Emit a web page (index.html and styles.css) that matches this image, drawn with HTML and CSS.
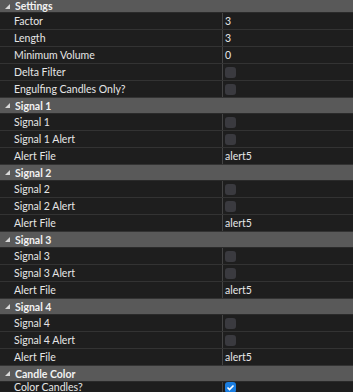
FILE: index.html
```html
<html>
	<head>
		<title>Properties</title>
		<link rel="stylesheet" href="styles.css">
	</head>
	<body>
		<div class="grid">
			<div class="cat first"><svg class="tri" width="5" height="5"><polygon points="5,0 5,5 0,5"/></svg>Settings</div>
			<div class="row"><div class="name">Factor</div><div class="val">3</div></div>
			<div class="row"><div class="name">Length</div><div class="val">3</div></div>
			<div class="row"><div class="name">Minimum Volume</div><div class="val">0</div></div>
			<div class="row"><div class="name">Delta Filter</div><div class="val"><span class="box"></span></div></div>
			<div class="row"><div class="name">Engulfing Candles Only?</div><div class="val"><span class="box"></span></div></div>

			<div class="cat"><svg class="tri" width="5" height="5"><polygon points="5,0 5,5 0,5"/></svg>Signal 1</div>
			<div class="row"><div class="name">Signal 1</div><div class="val"><span class="box"></span></div></div>
			<div class="row"><div class="name">Signal 1 Alert</div><div class="val"><span class="box"></span></div></div>
			<div class="row"><div class="name">Alert File</div><div class="val">alert5</div></div>

			<div class="cat"><svg class="tri" width="5" height="5"><polygon points="5,0 5,5 0,5"/></svg>Signal 2</div>
			<div class="row"><div class="name">Signal 2</div><div class="val"><span class="box"></span></div></div>
			<div class="row"><div class="name">Signal 2 Alert</div><div class="val"><span class="box"></span></div></div>
			<div class="row"><div class="name">Alert File</div><div class="val">alert5</div></div>

			<div class="cat"><svg class="tri" width="5" height="5"><polygon points="5,0 5,5 0,5"/></svg>Signal 3</div>
			<div class="row"><div class="name">Signal 3</div><div class="val"><span class="box"></span></div></div>
			<div class="row"><div class="name">Signal 3 Alert</div><div class="val"><span class="box"></span></div></div>
			<div class="row"><div class="name">Alert File</div><div class="val">alert5</div></div>

			<div class="cat"><svg class="tri" width="5" height="5"><polygon points="5,0 5,5 0,5"/></svg>Signal 4</div>
			<div class="row"><div class="name">Signal 4</div><div class="val"><span class="box"></span></div></div>
			<div class="row"><div class="name">Signal 4 Alert</div><div class="val"><span class="box"></span></div></div>
			<div class="row"><div class="name">Alert File</div><div class="val">alert5</div></div>

			<div class="cat"><svg class="tri" width="5" height="5"><polygon points="5,0 5,5 0,5"/></svg>Candle Color</div>
			<div class="row last"><div class="name">Color Candles?</div><div class="val"><span class="box on"><svg width="11" height="11"><polyline points="2.5,5.5 4.5,7.5 8.5,3.5"/></svg></span></div></div>
		</div>
	</body>
</html>
```
FILE: styles.css
```css
body {
	margin: 0;
	background-color: #1e1e1e;
	font-family: Lato, "Open Sans", sans-serif;
	font-size: 10.5px;
	color: #e6e6e6;
	overflow: hidden;
}
.grid {
	display: flex;
	flex-direction: column;
}
.cat {
	display: flex;
	align-items: center;
	height: 15px;
	border-bottom: 1px solid #2a2a2a;
	background-color: #595959;
	font-weight: 700;
	color: #f2f2f2;
}
.cat.first {
	height: 12px;
}
.tri {
	margin: 0 5px 0 5px;
	fill: #d8d8d8;
}
.row {
	display: flex;
	height: 16px;
	border-bottom: 1px solid #333333;
	background-color: #1e1e1e;
}
.row.last {
	height: 11px;
	border-bottom: 0;
	line-height: 11px;
	align-items: flex-start;
}
.row.last .name {
	align-items: flex-end;
	height: 11px;
}
.name {
	width: 208px;
	padding-left: 14px;
	display: flex;
	align-items: center;
	white-space: nowrap;
}
.val {
	flex: 1;
	border-left: 1px solid #444444;
	padding-left: 2px;
	display: flex;
	align-items: center;
	color: #e6e6e6;
}
.box {
	display: block;
	width: 11px;
	height: 11px;
	border-radius: 3px;
	background-color: #3a3a3f;
}
.box.on {
	background-color: #1a7de0;
}
.box svg {
	display: block;
}
.box polyline {
	fill: none;
	stroke: #ffffff;
	stroke-width: 1.6;
}
```
